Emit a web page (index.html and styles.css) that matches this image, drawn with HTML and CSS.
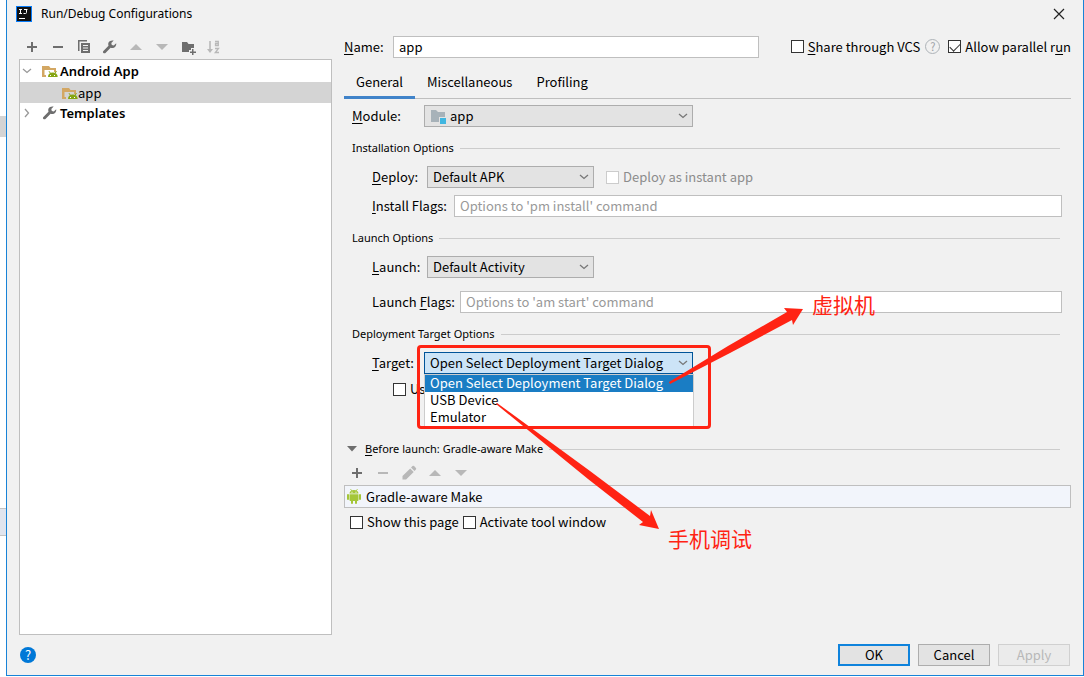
FILE: index.html
```html
<!DOCTYPE html>
<html lang="en">
<head>
<meta charset="utf-8">
<title>Run/Debug Configurations</title>
<link rel="stylesheet" href="styles.css">
</head>
<body>
<svg class="defs" aria-hidden="true">
  <symbol id="plus" viewBox="0 0 16 16"><path d="M7 3h2v4h4v2H9v4H7V9H3V7h4z" fill="currentColor"/></symbol>
  <symbol id="minus" viewBox="0 0 16 16"><path d="M3 7h10v2H3z" fill="currentColor"/></symbol>
  <symbol id="up" viewBox="0 0 16 16"><path d="M8 5l6 6H2z" fill="currentColor"/></symbol>
  <symbol id="down" viewBox="0 0 16 16"><path d="M8 11L2 5h12z" fill="currentColor"/></symbol>
  <symbol id="wrench" viewBox="0 0 16 16"><path d="M14.2 4.2l-2.4 2.2-2-.5-.5-2 2.400-2.300C9.700 1 7.600 1.700 6.700 3.300c-.6 1.100-.6 2.300-.2 3.400L1.400 11.900c-.6.6-.6 1.400 0 2 .6.6 1.500.6 2.100 0l5.100-5.100c1.200.5 2.600.3 3.700-.4 1.500-.9 2.200-2.600 1.900-4.200z" fill="currentColor"/></symbol>
  <symbol id="chevron" viewBox="0 0 10 6"><path d="M1 1l4 3.500L9 1" fill="none" stroke="currentColor" stroke-width="1.300"/></symbol>
  <symbol id="folder-android" viewBox="0 0 16 16">
    <path d="M0 3h7l1.500 2H14v4h-2V7H2.500v5H4v2H0z" fill="#d3a763"/>
    <path d="M6 14c0-2.800 1.800-4.500 4.800-4.500s4.900 1.700 4.900 4.500z" fill="#86a613"/>
    <path d="M7 8.200l1.600 2.300M14.500 8.200l-1.600 2.300" stroke="#86a613"/>
    <path d="M8 12h1v1H8zM12 12h1v1h-1z" fill="#fff"/>
  </symbol>
</svg>
<aside class="backdrop" aria-hidden="true"><i class="backdrop-scroll"></i><i class="backdrop-row"></i></aside>
<div class="dialog">
  <header class="titlebar">
    <svg class="logo" viewBox="0 0 16 16"><path d="M0 0h16v16H0z" fill="#087cfa"/><path d="M1 1h14v14H1z" fill="#111"/><path d="M3 3.500h3M4.500 3.500v4M3 7.500h3M8 3.500h3.500M10.500 3.500v3q0 1-1 1H7.500" fill="none" stroke="#fff"/><path d="M3 12h6v1H3z" fill="#fff"/></svg>
    <h1>Run/Debug Configurations</h1>
    <button class="icon-button close" aria-label="Close"><svg viewBox="0 0 12 12"><path d="M1 1l10 10M11 1L1 11" stroke="#222" stroke-width="1.200"/></svg></button>
  </header>
  <div class="content">
    <nav class="sidebar">
      <div class="toolbar">
        <button class="icon-button" aria-label="Add"><svg><use href="#plus"/></svg></button>
        <button class="icon-button" aria-label="Remove"><svg><use href="#minus"/></svg></button>
        <button class="icon-button" aria-label="Copy"><svg viewBox="0 0 16 16"><path d="M2 1h9v1.500H3.500V12H2z" fill="currentColor"/><path fill-rule="evenodd" d="M5 4h9v10H5zm2 2v1h5V6zm0 2.500v1h5v-1zM7 11v1h5v-1z" fill="currentColor"/></svg></button>
        <button class="icon-button" aria-label="Edit templates"><svg><use href="#wrench"/></svg></button>
        <button class="icon-button" aria-label="Move up" disabled><svg><use href="#up"/></svg></button>
        <button class="icon-button" aria-label="Move down" disabled><svg><use href="#down"/></svg></button>
        <button class="icon-button" aria-label="New folder"><svg viewBox="0 0 16 16"><path d="M2 3h5l1.500 2H14v4h-3v2H9v2H2z" fill="currentColor"/><path d="M12 10h1.500v2.500H16V14h-2.500v2H12v-2h-2v-1.500h2z" fill="currentColor"/></svg></button>
        <button class="icon-button" aria-label="Sort" disabled><svg viewBox="0 0 16 16"><path d="M3.200 2h1.600v8H7l-3 4-3-4h2.200z" fill="currentColor"/><path d="M9 2.500h3.300v4H9.500v-2h2.800M9 9.500h3.500l-3.200 4H13" fill="none" stroke="currentColor" stroke-width="1.300"/></svg></button>
      </div>
      <ul class="tree">
        <li class="node"><svg class="twisty open" viewBox="0 0 10 6"><use href="#chevron"/></svg><svg class="icon"><use href="#folder-android"/></svg><b>Android App</b></li>
        <li class="node leaf selected"><svg class="icon"><use href="#folder-android"/></svg>app</li>
        <li class="node"><svg class="twisty" viewBox="0 0 10 6"><use href="#chevron"/></svg><svg class="icon gray"><use href="#wrench"/></svg><b>Templates</b></li>
      </ul>
    </nav>
    <main class="editor">
      <div class="name-row">
        <label for="name"><u>N</u>ame:</label>
        <input class="field" id="name" type="text" value="app">
        <div class="options">
          <label class="check"><input type="checkbox"><span><u>S</u>hare through VCS</span></label>
          <button class="icon-button hint" aria-label="About sharing">?</button>
          <label class="check"><input type="checkbox" checked><span>Allow parallel r<u>u</u>n</span></label>
        </div>
      </div>
      <div class="tabs" role="tablist">
        <button class="tab active" role="tab" aria-selected="true">General</button>
        <button class="tab" role="tab">Miscellaneous</button>
        <button class="tab" role="tab">Profiling</button>
      </div>
      <section class="panel">
        <div class="row module">
          <label for="module"><u>M</u>odule:</label>
          <div class="combo wide with-icon">
            <select id="module"><option>app</option></select>
            <svg class="combo-icon" viewBox="0 0 16 16"><path d="M1 2h5l2 2h7v10H1z" fill="#a7b2b9"/><path d="M9 9h7v7H9z" fill="#e3e3e3"/><path d="M10 10h6v6h-6z" fill="#40b6e0"/></svg>
            <svg class="arrow"><use href="#chevron"/></svg>
          </div>
        </div>
        <h2>Installation Options</h2>
        <div class="row short">
          <label for="deploy"><u>D</u>eploy:</label>
          <div class="combo"><select id="deploy"><option>Default APK</option></select><svg class="arrow"><use href="#chevron"/></svg></div>
          <label class="check instant"><input type="checkbox" disabled><span>Deploy as instant app</span></label>
        </div>
        <div class="row flags install"><label for="install"><u>I</u>nstall Flags:</label><input class="field" id="install" type="text" placeholder="Options to 'pm install' command"></div>
        <h2>Launch Options</h2>
        <div class="row short">
          <label for="launch"><u>L</u>aunch:</label>
          <div class="combo"><select id="launch"><option>Default Activity</option></select><svg class="arrow"><use href="#chevron"/></svg></div>
        </div>
        <div class="row flags launch"><label for="lflags">Launch <u>F</u>lags:</label><input class="field" id="lflags" type="text" placeholder="Options to 'am start' command"></div>
        <h2>Deployment Target Options</h2>
        <div class="row target">
          <label for="target"><u>T</u>arget:</label>
          <div class="combo wide focused">
            <select id="target"><option>Open Select Deployment Target Dialog</option><option>USB Device</option><option>Emulator</option></select>
            <svg class="arrow"><use href="#chevron"/></svg>
            <ul class="popup" role="listbox">
              <li class="current" role="option" aria-selected="true">Open Select Deployment Target Dialog</li>
              <li role="option">USB Device</li>
              <li role="option">Emulator</li>
            </ul>
            <div class="callout"></div>
            <svg class="callout-arrows" viewBox="417 300 393 235">
              <path d="M669 382L728 346L787 312L784 308L803 309L793 325L792 320L730 353L670 384Z"/>
              <path d="M497 403L590 471L650 516L651 510L659 529L639 525L643 522L588 479L496 404Z"/>
            </svg>
            <span class="note emulator" lang="zh">虚拟机</span>
            <span class="note phone" lang="zh">手机调试</span>
          </div>
        </div>
        <label class="check same-device"><input type="checkbox"><span>Use</span></label>
      </section>
      <section class="before">
        <h2><svg class="disclosure" viewBox="0 0 10 6"><path d="M0 0h10L5 5.500z" fill="#6e6e6e"/></svg><span><u>B</u>efore launch: Gradle-aware Make</span></h2>
        <div class="toolbar">
          <button class="icon-button" aria-label="Add task"><svg><use href="#plus"/></svg></button>
          <button class="icon-button" aria-label="Remove task" disabled><svg><use href="#minus"/></svg></button>
          <button class="icon-button" aria-label="Edit task" disabled><svg viewBox="0 0 16 16"><path d="M1.500 14.500v-3.600l7.700-7.500 3.500 3.500-7.600 7.600zM10 2.600l1.500-1.500q.8-.7 1.600 0l1.800 1.800q.7.8 0 1.600L13.500 6z" fill="currentColor"/></svg></button>
          <button class="icon-button" aria-label="Move task up" disabled><svg><use href="#up"/></svg></button>
          <button class="icon-button" aria-label="Move task down" disabled><svg><use href="#down"/></svg></button>
        </div>
        <ul class="tasks"><li><svg class="icon" viewBox="0 0 16 16"><g fill="#a4c639"><path d="M3.500 4.500c0-2.300 2-3.500 4.500-3.500s4.500 1.200 4.500 3.500zM3.500 5.200h9V11q0 1-1 1h-7q-1 0-1-1z"/><rect x="1" y="5" width="2" height="6" rx="1"/><rect x="13" y="5" width="2" height="6" rx="1"/><rect x="5" y="10" width="2" height="5" rx="1"/><rect x="9" y="10" width="2" height="5" rx="1"/></g><path d="M4.500 0l1.300 2M11.500 0l-1.300 2" stroke="#a4c639" stroke-width=".8"/><path d="M5.500 2.700h1v1h-1zM9.500 2.700h1v1h-1z" fill="#fff"/></svg>Gradle-aware Make</li></ul>
        <div class="checks">
          <label class="check"><input type="checkbox"><span>Show this page</span></label>
          <label class="check"><input type="checkbox"><span>Activate tool window</span></label>
        </div>
      </section>
    </main>
  </div>
  <footer class="footer">
    <button class="help" aria-label="Help">?</button>
    <button class="button primary">OK</button>
    <button class="button">Cancel</button>
    <button class="button" disabled>Apply</button>
  </footer>
</div>
</body>
</html>
```
FILE: styles.css
```css
* { box-sizing: border-box; }
body {
  margin: 0;
  display: flex;
  min-height: 100vh;
  padding-bottom: 1px;
  background: #fff;
  color: #000;
  font: 13px/16px "Noto Sans CJK SC", "Noto Sans", sans-serif;
}
button, input, select { font: inherit; color: inherit; }
ul { margin: 0; padding: 0; list-style: none; }
h1, h2 { margin: 0; font-weight: 400; }
u { text-underline-offset: 2px; }
.defs { position: absolute; width: 0; height: 0; }

.backdrop { width: 6px; display: flex; flex-direction: column; }
.backdrop-scroll { height: 21px; margin-top: 116px; background: #d4d4d4; }
.backdrop-row { height: 28px; margin-top: 371px; background: #e1e5ee; border: solid #c4c4c4; border-width: 1px 0; }

.dialog {
  flex: 1;
  min-width: 0;
  display: flex;
  flex-direction: column;
  background: #f1f1f1;
  border: solid #1883d7;
  border-width: 0 1px 1px;
}
.titlebar { display: flex; align-items: center; height: 27px; padding: 0 18px 0 9px; }
.titlebar h1 { flex: 1; margin-left: 9px; font: 12px/16px "Noto Sans", sans-serif; }
.logo { width: 16px; height: 16px; }
.icon-button { width: 16px; height: 16px; padding: 0; border: 0; background: none; color: #6e6e6e; }
.icon-button svg { display: block; width: 16px; height: 16px; }
.icon-button:disabled { color: #b8b8b8; }
.icon-button.close, .close svg { width: 12px; height: 12px; }

.content { flex: 1; display: flex; gap: 12px; padding: 1px 12px 0; }
.toolbar { display: flex; gap: 10px; padding-left: 5px; }
.sidebar { flex: 0 0 313px; display: flex; flex-direction: column; padding-top: 11px; }
.tree { flex: 1; margin-top: 4px; background: #fff; border: 1px solid #bfbfbf; }
.node { display: flex; align-items: center; height: 21px; }
.node:first-child { height: 22px; }
.node:last-child { height: 20px; }
.node.leaf { padding-left: 42px; }
.selected { background: #d4d4d4; }
.twisty { width: 10px; height: 6px; margin: 0 10px 0 2px; color: #999; transform: rotate(-90deg); }
.twisty.open { transform: none; }
.icon { width: 16px; height: 16px; }
.icon.gray { color: #6e6e6e; }
.node b { margin-left: 2px; font: 600 13px/16px "Noto Sans", sans-serif; }

.editor { flex: 1; min-width: 0; padding-top: 8px; }
.name-row { display: flex; align-items: center; }
.name-row > label { width: 49px; }
.field { flex: 1; min-width: 0; height: 22px; padding: 0 5px 2px; background: #fff; border: 1px solid #bfbfbf; outline: 0; }
.field::placeholder { color: #999; opacity: 1; }
.options { display: flex; align-items: center; margin-left: 32px; padding-bottom: 1px; }
.check { display: flex; align-items: center; gap: 4px; height: 16px; white-space: nowrap; }
.check input { appearance: none; flex: none; width: 13px; height: 13px; margin: 0; background: #fff; border: 1px solid #333; }
.check input:checked::before { content: ""; display: block; width: 9px; height: 5px; margin: 2px 1px; border: solid #333; border-width: 0 0 1px 1px; transform: rotate(-45deg); }
.check input:disabled { border-color: #ccc; }
.check input:disabled + span { color: #8c8c8c; }
.hint { margin: 0 8px 0 5px; width: 15px; height: 15px; border: 1px solid #adb3b8; border-radius: 50%; color: #9aa0a5; font-size: 11px; line-height: 13px; }

.tabs { display: flex; height: 34px; margin-top: 7px; box-shadow: inset 0 -1px #bfbfbf; }
.tab { padding: 2px 12px 0; border: 0; border-bottom: 3px solid transparent; background: none; }
.tab.active { border-color: #4083c9; }

.panel { padding: 6px 9px 0 8px; }
.row { display: flex; align-items: center; padding-left: 20px; margin-top: 10px; }
.row.module { padding-left: 0; margin-top: 0; }
.module > label:first-child { width: 72px; }
.short > label:first-child { width: 55px; }
.target > label:first-child { width: 52px; }
.install > label { width: 82px; }
.launch > label { width: 88px; }
.row.install { margin-top: 7px; }
.row.launch { margin-top: 13px; }
.instant { margin-left: 12px; }
h2 { display: flex; align-items: center; gap: 6px; font: 11px/16px "Noto Sans", sans-serif; margin: 13px 2px 0 0; }
h2::after { content: ""; flex: 1; height: 1px; background: #ccc; }

.combo { position: relative; display: grid; width: 167px; height: 22px; align-items: center; }
.combo.wide { width: 269px; }
.combo > select, .combo > .arrow, .combo > .combo-icon { grid-area: 1 / 1; }
.combo select { appearance: none; width: 100%; height: 22px; padding: 0 20px 0 5px; background: #e3e3e3; border: 1px solid #adadad; border-radius: 0; outline: 0; }
.combo.with-icon select { padding-left: 25px; }
.combo-icon { width: 16px; height: 16px; margin-left: 6px; }
.arrow { justify-self: end; width: 10px; height: 6px; margin-right: 5px; color: #777; pointer-events: none; }
.combo.focused select { background: #cce4f7; border-color: #005499; }
.popup { position: absolute; top: 22px; left: 0; right: -1px; background: #fff; border: 1px solid #ccc; border-bottom: 0; }
.popup li { height: 17px; line-height: 16px; padding-left: 5px; }
.popup .current { background: #1a7dc4; color: #fff; }
.callout { position: absolute; top: -7px; left: -7px; width: 294px; height: 84px; border: 3px solid #ff2313; border-radius: 4px; pointer-events: none; }
.callout-arrows { position: absolute; top: -52px; left: -7px; width: 393px; height: 235px; fill: #ff2313; pointer-events: none; }
.note { position: absolute; color: #ff2313; font: 21px/24px "Noto Sans CJK SC", sans-serif; white-space: nowrap; }
.note.emulator { top: -60px; left: 388px; }
.note.phone { top: 174px; left: 244px; }
.same-device { margin: 7px 0 0 41px; }

.before { margin-top: 44px; }
.before h2 { margin: 0 11px 0 0; padding-left: 3px; }
.disclosure { width: 10px; height: 6px; margin-right: 2px; }
.before .toolbar { margin-top: 8px; }
.tasks { margin-top: 4px; background: #f2f5fb; border: 1px solid #bfbfbf; }
.tasks li { display: flex; align-items: center; gap: 4px; height: 21px; padding-left: 1px; }
.checks { display: flex; gap: 4px; margin-top: 6px; padding-left: 6px; }

.footer { display: flex; align-items: center; gap: 8px; height: 40px; padding: 0 13px; }
.help { width: 16px; height: 16px; margin-right: auto; padding: 0; border: 0; border-radius: 50%; background: #0078d7; color: #fff; line-height: 16px; }
.button { width: 72px; height: 22px; padding: 0; border: 1px solid #adadad; background: #e3e3e3; }
.button.primary { border: 2px solid #0f83dc; }
.button:disabled { border-color: #d0d0d0; background: #ebebeb; color: #b8b8b8; }
```
